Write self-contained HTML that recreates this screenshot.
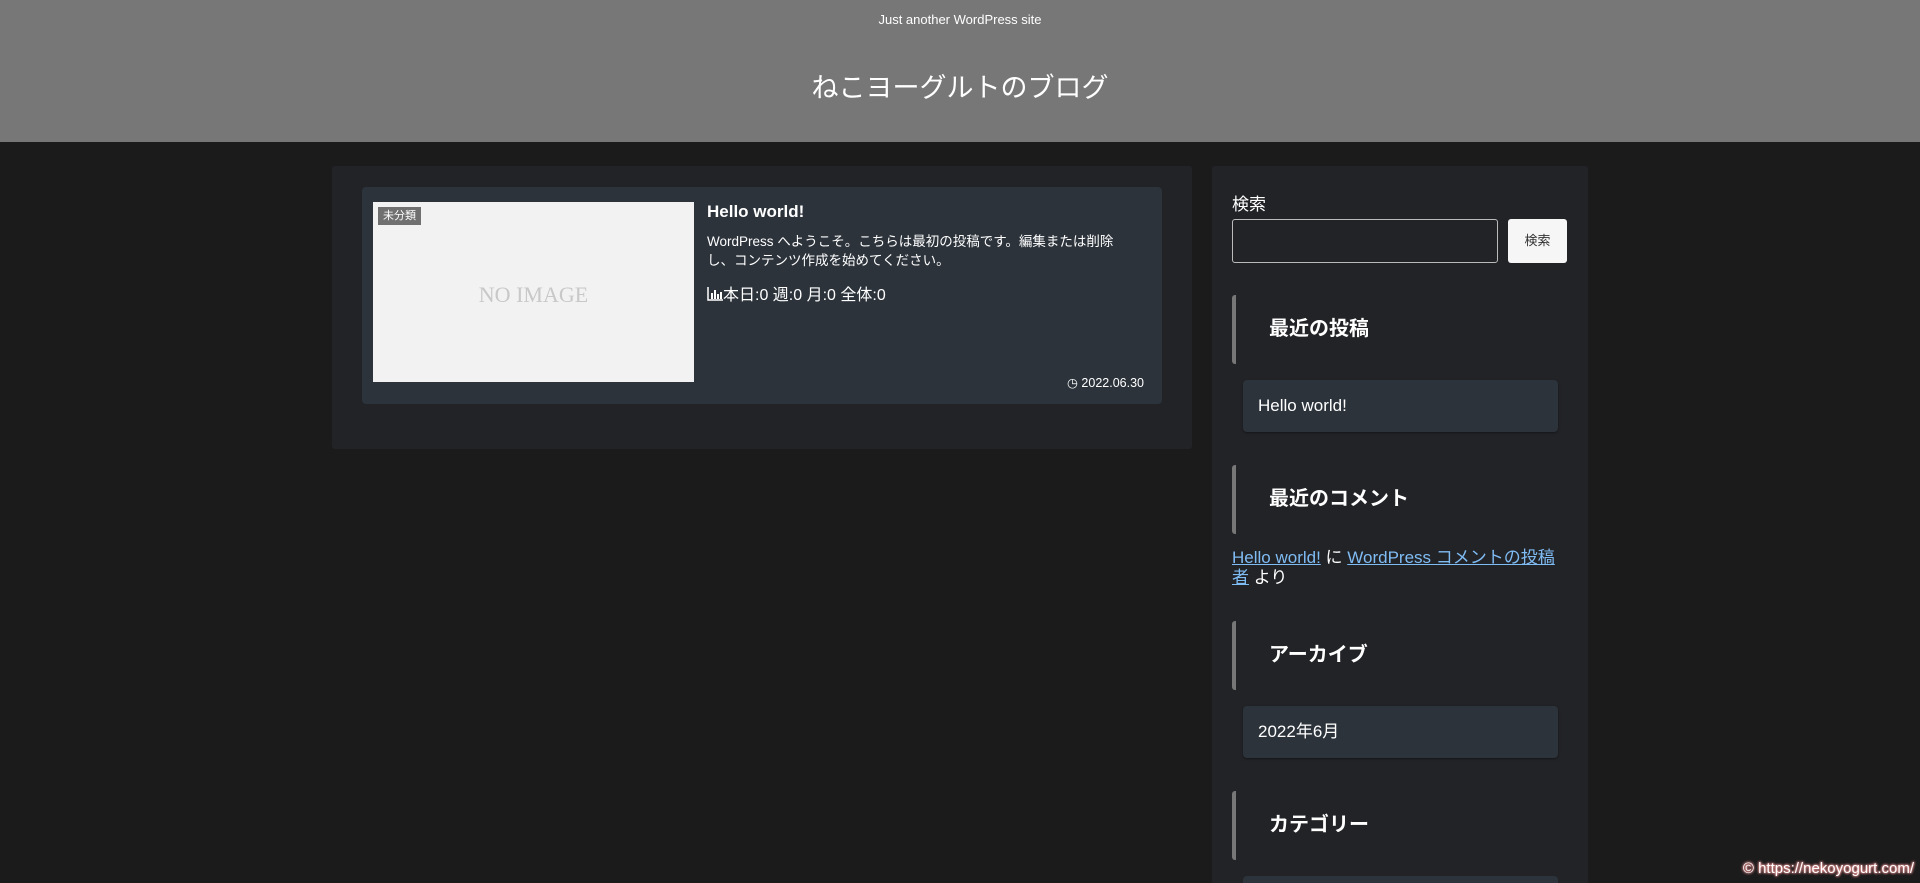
<!DOCTYPE html>
<html><head><meta charset="utf-8"><style>
*{box-sizing:border-box;margin:0;padding:0}
html,body{width:1920px;height:883px;overflow:hidden}
body{background:#1c1b1c;font-family:"Liberation Sans","Noto Sans CJK JP",sans-serif;color:#fff}
#w{position:relative;width:1920px;height:883px;overflow:hidden}
.hd{position:absolute;left:0;top:0;width:1920px;height:142px;background:#777}
.tag{position:absolute;top:12px;width:100%;text-align:center;font-size:13px}
.ttl{position:absolute;top:66px;width:100%;text-align:center;font-size:27px}
.main{position:absolute;left:332px;top:166px;width:860px;height:283px;background:#222327;border-radius:3px}
.card{position:absolute;left:362px;top:187px;width:800px;height:217px;background:#2c333b;border-radius:4px}
.img{position:absolute;left:373px;top:202px;width:321px;height:180px;background:#f2f2f2;color:#c8c8c8;font-family:"Liberation Serif",serif;font-size:22px;text-align:center;line-height:186px}
.cat{position:absolute;left:378px;top:207px;background:#707070;color:#fff;font-size:11px;padding:2px 5px;line-height:14px}
.ptl{position:absolute;left:707px;top:202px;font-size:17px;font-weight:bold}
.ex{position:absolute;left:707px;top:232px;width:432px;font-size:13.5px;line-height:19px}
.vw{position:absolute;left:707px;top:281px;font-size:16px}
.dt{position:absolute;right:776px;top:375px;font-size:12.5px}
.side{position:absolute;left:1212px;top:166px;width:376px;height:717px;background:#222327;border-radius:3px 3px 0 0}
.lbl{position:absolute;left:1232px;top:190px;font-size:17px}
.inp{position:absolute;left:1232px;top:219px;width:266px;height:44px;border:1px solid #bbb;border-radius:3px}
.btn{position:absolute;left:1508px;top:219px;width:59px;height:44px;background:#f6f6f6;border-radius:3px;color:#333;font-size:13px;text-align:center;line-height:44px}
.wh{position:absolute;left:1232px;width:326px;height:69px;border-left:4px solid #777;border-radius:3px;font-size:20px;font-weight:bold;padding-left:33px;line-height:69px}
.box{position:absolute;left:1243px;width:315px;height:52px;background:#2c333b;border-radius:4px;font-size:17px;line-height:52px;padding-left:15px;box-shadow:0 1px 2px rgba(0,0,0,.4)}
.cm{position:absolute;left:1232px;top:548px;width:330px;font-size:17px;line-height:20px}
.cm a{color:#7fbcf4}
.wm{position:absolute;right:6px;bottom:6px;color:#fff;font-size:15px;text-shadow:0 0 2px #e89090,0 0 2px #e89090,0 0 3px #e89090}
</style></head><body><div id="w">
<div class="hd"><div class="tag">Just another WordPress site</div><div class="ttl">ねこヨーグルトのブログ</div></div>
<div class="main"></div>
<div class="card"></div>
<div class="img">NO IMAGE</div>
<div class="cat">未分類</div>
<div class="ptl">Hello world!</div>
<div class="ex">WordPress へようこそ。こちらは最初の投稿です。編集または削除し、コンテンツ作成を始めてください。</div>
<div class="vw"><svg width="16" height="14" viewBox="0 0 16 14" style="vertical-align:-1px"><path d="M1 0v13h15" stroke="#fff" stroke-width="1.5" fill="none"/><rect x="4" y="6" width="2" height="6" fill="#fff"/><rect x="7" y="3" width="2" height="9" fill="#fff"/><rect x="10" y="7" width="2" height="5" fill="#fff"/><rect x="13" y="5" width="2" height="7" fill="#fff"/></svg>本日:0 週:0 月:0 全体:0</div>
<div class="dt">◷ 2022.06.30</div>
<div class="side"></div>
<div class="lbl">検索</div>
<div class="inp"></div>
<div class="btn">検索</div>
<div class="wh" style="top:295px">最近の投稿</div>
<div class="box" style="top:380px">Hello world!</div>
<div class="wh" style="top:465px">最近のコメント</div>
<div class="cm"><a href="#">Hello world!</a> に <a href="#">WordPress コメントの投稿者</a> より</div>
<div class="wh" style="top:621px">アーカイブ</div>
<div class="box" style="top:706px">2022年6月</div>
<div class="wh" style="top:791px">カテゴリー</div>
<div class="box" style="top:876px;height:7px;border-radius:4px 4px 0 0;box-shadow:none"></div>
<div class="wm">© https://nekoyogurt.com/</div>
</div></body></html>
